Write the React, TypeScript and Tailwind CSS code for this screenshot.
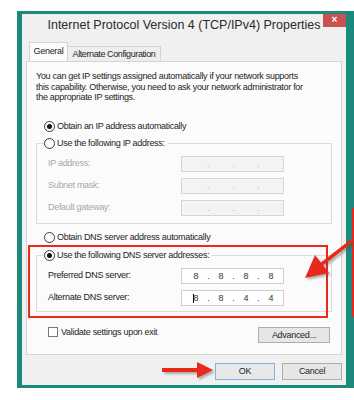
import React from "react";

const Radio = ({ checked }: { checked?: boolean }) => (
  <span className="w-[11px] h-[11px] rounded-full border border-[#3a3a3a] bg-white flex items-center justify-center shrink-0">
    {checked && <span className="w-[5px] h-[5px] rounded-full bg-[#111]" />}
  </span>
);

const IpBox = ({ values, disabled, cursor }: { values?: string[]; disabled?: boolean; cursor?: boolean }) => {
  const segs = values ?? ["", "", "", ""];
  return (
    <div
      className={`w-[103px] h-[16px] border flex items-center pl-[4px] tracking-normal ${
        disabled ? "border-[#d5d5d5] bg-[#f3f3f3] text-[#b0b0b0]" : "border-[#cfcfcf] bg-white text-[#333]"
      }`}
    >
      {segs.map((v, i) => (
        <React.Fragment key={i}>
          <span className="w-[20px] text-center relative leading-[14px]">
            {i === 0 && cursor && <span className="absolute left-[7px] top-[3px] w-px h-[9px] bg-black" />}
            {v}
          </span>
          {i < 3 && <span className="w-[5px] text-center leading-[14px]">.</span>}
        </React.Fragment>
      ))}
    </div>
  );
};

const Row = ({ label, children, disabled }: { label: string; children: React.ReactNode; disabled?: boolean }) => (
  <div className="flex items-center h-[16px]">
    <span className={`w-[144px] pl-[11px] ${disabled ? "text-[#a8a8a8]" : "text-[#222]"}`}>{label}</span>
    {children}
  </div>
);

export default function App() {
  return (
    <div
      className="relative w-[354px] h-[400px] bg-white overflow-hidden pt-[11px] pl-[17px] text-[9px] tracking-[-0.3px] text-[#1e1e1e]"
      style={{ fontFamily: '"Liberation Sans", Arial, sans-serif' }}
    >
      <div className="w-[337px] border-[#1b8a7d] border-l-[5px] border-r-[8px] border-t-[3px] border-b-[3px] bg-[#f0f0f0] flex flex-col">
        {/* Title bar */}
        <div className="h-[29px] grid grid-cols-[23px_1fr_23px]">
          <div />
          <div className="text-center text-[12.5px] tracking-normal leading-[22px] text-[#2a2a2a]">
            Internet Protocol Version 4 (TCP/IPv4) Properties
          </div>
          <div className="h-[13px] bg-[#c9514f] text-white text-[10px] leading-[12px] text-center font-bold tracking-normal">×</div>
        </div>

        {/* Tabs */}
        <div className="mx-[4px] flex items-end h-[18px] pl-[3px]">
          <div className="h-[19px] w-[39px] border border-b-0 border-[#d4d4d4] bg-[#fbfbfb] relative z-10 leading-[16px] text-center">
            General
          </div>
          <div className="h-[15px] w-[93px] border border-l-0 border-b-0 border-[#d4d4d4] bg-[#eeeeee] leading-[14px] text-center tracking-[-0.4px]">
            Alternate Configuration
          </div>
        </div>

        {/* Panel */}
        <div className="mx-[4px] border border-[#d4d4d4] bg-[#fbfbfb] pt-[9px] pb-[11px] px-[9px]">
          <p className="leading-[10.5px] whitespace-nowrap">
            You can get IP settings assigned automatically if your network supports
            <br />
            this capability. Otherwise, you need to ask your network administrator for
            <br />
            the appropriate IP settings.
          </p>

          <div className="mt-[18px] h-[12px] flex items-center gap-[2px] pl-[8px]">
            <Radio checked />
            <span>Obtain an IP address automatically</span>
          </div>

          <fieldset className="mt-[5px] border border-[#dcdcdc] w-[296px]">
            <legend className="ml-[7px] h-[12px] flex items-center gap-[2px] pr-[3px]">
              <Radio />
              <span>Use the following IP address:</span>
            </legend>
            <div className="pt-[6px] pb-[7px] flex flex-col gap-[6px]">
              <Row label="IP address:" disabled>
                <IpBox disabled />
              </Row>
              <Row label="Subnet mask:" disabled>
                <IpBox disabled />
              </Row>
              <Row label="Default gateway:" disabled>
                <IpBox disabled />
              </Row>
            </div>
          </fieldset>

          <div className="mt-[8px] h-[12px] flex items-center gap-[2px] pl-[8px]">
            <Radio />
            <span>Obtain DNS server address automatically</span>
          </div>

          <fieldset className="mt-[6px] border border-[#dcdcdc] w-[296px]">
            <legend className="ml-[7px] h-[12px] flex items-center gap-[2px] pr-[3px]">
              <Radio checked />
              <span>Use the following DNS server addresses:</span>
            </legend>
            <div className="pt-[6px] pb-[5px] flex flex-col gap-[6px]">
              <Row label="Preferred DNS server:">
                <IpBox values={["8", "8", "8", "8"]} />
              </Row>
              <Row label="Alternate DNS server:">
                <IpBox values={["8", "8", "4", "4"]} cursor />
              </Row>
            </div>
          </fieldset>

          <div className="mt-[15px] flex items-start justify-between pr-[2px]">
            <div className="flex items-start gap-[3px] pl-[12px]">
              <span className="w-[10px] h-[10px] border border-[#7a7a7a] bg-white" />
              <span className="leading-[10px]">Validate settings upon exit</span>
            </div>
            <div className="w-[72px] h-[16px] border border-[#adadad] bg-[#e6e6e6] text-center leading-[14px]">
              Advanced...
            </div>
          </div>
        </div>

        {/* Bottom buttons */}
        <div className="mt-[8px] mx-[4px] flex justify-end gap-[7px] pb-[5px]">
          <div className="w-[60px] h-[17px] border border-[#7fb2e3] bg-[#e8e8e8] text-center leading-[15px]">OK</div>
          <div className="w-[60px] h-[17px] border border-[#adadad] bg-[#e6e6e6] text-center leading-[15px]">Cancel</div>
        </div>
      </div>

      {/* Annotations */}
      <div className="absolute left-[28px] top-[245px] w-[300px] h-[73px] border-2 border-[#e8291c] pointer-events-none" />
      <div className="absolute left-[352px] top-[208px] w-[2px] h-[109px] bg-[#e8291c]" />
      <svg className="absolute left-0 top-0 pointer-events-none" width="354" height="400" viewBox="0 0 354 400">
        <defs>
          <filter id="sh" x="-20%" y="-20%" width="140%" height="140%">
            <feGaussianBlur stdDeviation="1.2" />
          </filter>
        </defs>
        <g transform="translate(2,2)" fill="#555" opacity="0.45" filter="url(#sh)">
          <line x1="358" y1="236" x2="318" y2="267" stroke="#555" strokeWidth="3.5" />
          <polygon points="305,278 315,255 329,273" />
          <rect x="162" y="368" width="38" height="4" />
          <polygon points="213,370 197,362 197,378" />
        </g>
        <g fill="#e8291c">
          <line x1="358" y1="236" x2="318" y2="267" stroke="#e8291c" strokeWidth="3.5" />
          <polygon points="305,278 315,255 329,273" />
          <rect x="162" y="368" width="38" height="4" />
          <polygon points="213,370 197,362 197,378" />
        </g>
      </svg>
    </div>
  );
}
